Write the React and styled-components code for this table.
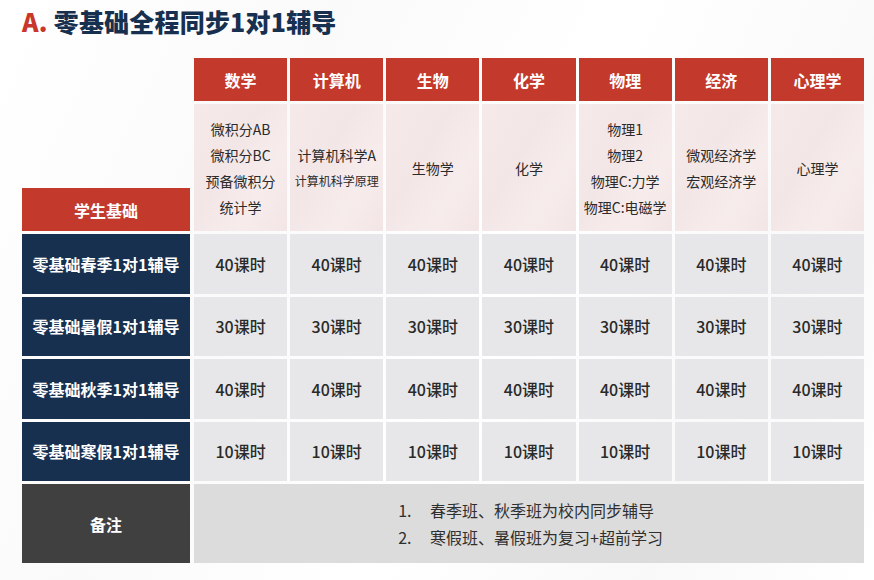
import React from "react";
import styled, { createGlobalStyle } from "styled-components";

const Global = createGlobalStyle`
  html, body { margin: 0; padding: 0; background: #ffffff; }
  body { font-family: "Noto Sans CJK SC", "Noto Sans", sans-serif; }
`;

const Page = styled.div`
  width: 874px;
  height: 580px;
  box-sizing: border-box;
  padding: 3px 0 0 22px;
  background: linear-gradient(115deg, #ffffff 0%, #fafafa 30%, #ffffff 55%, #f9f9f9 80%, #ffffff 100%);
  overflow: hidden;
`;

const Title = styled.h1`
  margin: 0 0 19px 0;
  font-size: 25px;
  line-height: 36px;
  font-weight: 900;
  color: #17304f;
  letter-spacing: 0.2px;
`;

const Accent = styled.span`
  color: #c8372a;
  margin-right: 6px;
`;

const Grid = styled.div`
  width: 842px;
  display: grid;
  grid-template-columns: 169px repeat(7, 1fr);
  grid-template-rows: 43px 127px repeat(4, 59.5px) 79px;
  column-gap: 3px;
  row-gap: 3px;
`;

const Cell = styled.div`
  display: flex;
  align-items: center;
  justify-content: center;
  text-align: center;
  box-sizing: border-box;
`;

const Blank = styled.div``;

const HeadCell = styled(Cell)`
  background: #c3392b;
  color: #ffffff;
  font-size: 16px;
  font-weight: 700;
`;

const BaseCell = styled(HeadCell)`
  align-self: end;
  height: 43px;
  margin-right: 1px;
`;

const CourseCell = styled(Cell)`
  flex-direction: column;
  background: linear-gradient(120deg, #f6e9e9 0%, #f3e6e6 40%, #f7ecec 70%, #f3e5e5 100%);
  color: #2b2b2b;
  font-size: 14px;
  line-height: 26px;
`;

const Small = styled.span`
  font-size: 12px;
`;

const RowLabel = styled(Cell)`
  background: #17304f;
  color: #ffffff;
  font-size: 16px;
  font-weight: 700;
  margin-right: 1px;
`;

const HourCell = styled(Cell)`
  background: #e7e7e9;
  color: #2a2a2a;
  font-size: 16px;
  font-weight: 500;
`;

const NoteLabel = styled(Cell)`
  background: #404040;
  color: #ffffff;
  font-size: 16px;
  font-weight: 700;
  margin-right: 1px;
`;

const NoteCell = styled(Cell)`
  grid-column: 2 / span 7;
  background: #dcdcdc;
  padding-right: 10px;
`;

const NoteList = styled.ol`
  margin: 0;
  padding: 0 0 0 30px;
  text-align: left;
  color: #2f2f2f;
  font-size: 16px;
  line-height: 27px;
  & li { padding-left: 15px; }
`;

const subjects = ["数学", "计算机", "生物", "化学", "物理", "经济", "心理学"];
const courses = [
  [["微积分AB"], ["微积分BC"], ["预备微积分"], ["统计学"]],
  [["计算机科学A"], ["计算机科学原理", true]],
  [["生物学"]],
  [["化学"]],
  [["物理1"], ["物理2"], ["物理C:力学"], ["物理C:电磁学"]],
  [["微观经济学"], ["宏观经济学"]],
  [["心理学"]],
];
const rows = [
  ["零基础春季1对1辅导", "40课时"],
  ["零基础暑假1对1辅导", "30课时"],
  ["零基础秋季1对1辅导", "40课时"],
  ["零基础寒假1对1辅导", "10课时"],
];

export default function App() {
  return (
    <Page>
      <Global />
      <Title>
        <Accent>A.</Accent>零基础全程同步1对1辅导
      </Title>
      <Grid>
        <Blank />
        {subjects.map((s) => (
          <HeadCell key={s}>{s}</HeadCell>
        ))}
        <BaseCell>学生基础</BaseCell>
        {courses.map((list, i) => (
          <CourseCell key={i}>
            {list.map(([t, small]) =>
              small ? <Small key={t}>{t}</Small> : <span key={t}>{t}</span>
            )}
          </CourseCell>
        ))}
        {rows.map(([label, hours]) => (
          <React.Fragment key={label}>
            <RowLabel>{label}</RowLabel>
            {subjects.map((s) => (
              <HourCell key={s}>{hours}</HourCell>
            ))}
          </React.Fragment>
        ))}
        <NoteLabel>备注</NoteLabel>
        <NoteCell>
          <NoteList>
            <li>春季班、秋季班为校内同步辅导</li>
            <li>寒假班、暑假班为复习+超前学习</li>
          </NoteList>
        </NoteCell>
      </Grid>
    </Page>
  );
}
